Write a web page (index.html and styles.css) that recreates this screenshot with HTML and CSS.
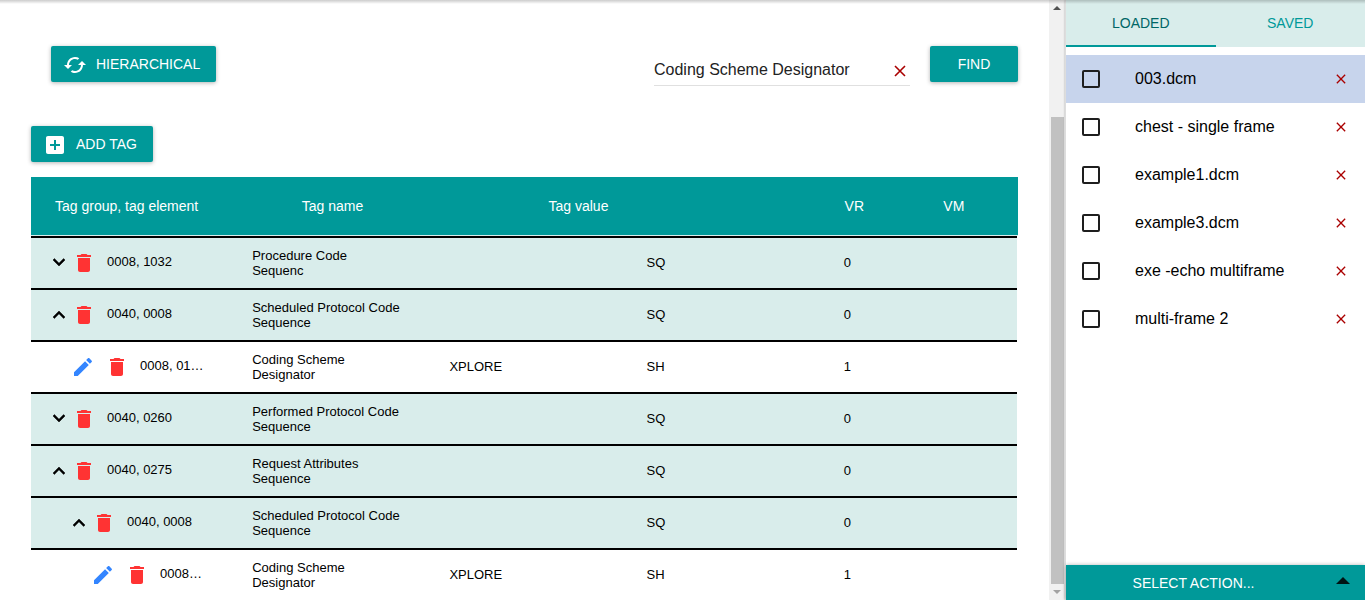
FILE: index.html
```html
<!DOCTYPE html>
<html lang="en">
<head>
<meta charset="utf-8">
<title>DICOM tags</title>
<link rel="stylesheet" href="styles.css">
</head>
<body>
<svg class="defs" aria-hidden="true">
  <symbol id="cached" viewBox="0 0 24 24"><path d="M19 8l-4 4h3c0 3.31-2.69 6-6 6-1.01 0-1.97-.25-2.8-.7l-1.46 1.46C8.97 19.54 10.43 20 12 20c4.42 0 8-3.58 8-8h3l-4-4zM6 12c0-3.31 2.69-6 6-6 1.01 0 1.97.25 2.8.7l1.46-1.46C15.03 4.46 13.57 4 12 4c-4.42 0-8 3.58-8 8H1l4 4 4-4H6z"/></symbol>
  <symbol id="add-box" viewBox="0 0 24 24"><path d="M19 3H5c-1.11 0-2 .9-2 2v14c0 1.1.89 2 2 2h14c1.1 0 2-.9 2-2V5c0-1.1-.9-2-2-2zm-2 10h-4v4h-2v-4H7v-2h4V7h2v4h4v2z"/></symbol>
  <symbol id="more" viewBox="0 0 24 24"><path d="M16.590 7.590L12 12.170 7.410 7.590 6 9l6 6 6-6z" stroke="currentColor" stroke-width=".5"/></symbol>
  <symbol id="less" viewBox="0 0 24 24"><path d="M12 8l-6 6 1.41 1.41L12 10.83l4.59 4.58L18 14z" stroke="currentColor" stroke-width=".5"/></symbol>
  <symbol id="trash" viewBox="0 0 24 24"><path d="M6 19c0 1.1.9 2 2 2h8c1.1 0 2-.9 2-2V7H6v12zM19 4h-3.500l-1-1h-5l-1 1H5v2h14V4z"/></symbol>
  <symbol id="pencil" viewBox="0 0 24 24"><path d="M3 17.250V21h3.750L17.810 9.940l-3.750-3.750L3 17.250zM20.710 7.040c.39-.39.39-1.020 0-1.410l-2.340-2.340c-.39-.39-1.020-.39-1.410 0l-1.830 1.830 3.750 3.750 1.830-1.830z"/></symbol>
  <symbol id="cross" viewBox="0 0 12 12"><path d="M1 1l10 10M11 1L1 11" fill="none" stroke="currentColor" stroke-width="1.600"/></symbol>
</svg>
<div class="app">
  <main class="content">
    <div class="toolbar">
      <button class="btn btn-icon" type="button"><svg class="icon"><use href="#cached"/></svg>HIERARCHICAL</button>
      <form class="search">
        <div class="field">
          <input type="text" aria-label="Find tag" value="Coding Scheme Designator">
          <button class="clear" type="button" aria-label="Clear"><svg class="cross"><use href="#cross"/></svg></button>
        </div>
        <button class="btn btn-find" type="button">FIND</button>
      </form>
    </div>
    <button class="btn btn-icon" type="button"><svg class="icon"><use href="#add-box"/></svg>ADD TAG</button>
    <table class="tags">
      <thead>
        <tr><th>Tag group, tag element</th><th>Tag name</th><th>Tag value</th><th>VR</th><th>VM</th></tr>
      </thead>
      <tbody>
        <tr class="group">
          <td><div class="tag"><button type="button" aria-label="Expand"><svg class="icon"><use href="#more"/></svg></button><button class="delete" type="button" aria-label="Delete"><svg class="icon"><use href="#trash"/></svg></button><span class="code">0008, 1032</span></div></td>
          <td>Procedure Code Sequenc</td><td></td><td>SQ</td><td>0</td>
        </tr>
        <tr class="group">
          <td><div class="tag"><button type="button" aria-label="Collapse"><svg class="icon"><use href="#less"/></svg></button><button class="delete" type="button" aria-label="Delete"><svg class="icon"><use href="#trash"/></svg></button><span class="code">0040, 0008</span></div></td>
          <td>Scheduled Protocol Code Sequence</td><td></td><td>SQ</td><td>0</td>
        </tr>
        <tr class="leaf">
          <td><div class="tag"><button class="edit" type="button" aria-label="Edit"><svg class="icon"><use href="#pencil"/></svg></button><button class="delete" type="button" aria-label="Delete"><svg class="icon"><use href="#trash"/></svg></button><span class="code">0008, 01…</span></div></td>
          <td>Coding Scheme Designator</td><td>XPLORE</td><td>SH</td><td>1</td>
        </tr>
        <tr class="group">
          <td><div class="tag"><button type="button" aria-label="Expand"><svg class="icon"><use href="#more"/></svg></button><button class="delete" type="button" aria-label="Delete"><svg class="icon"><use href="#trash"/></svg></button><span class="code">0040, 0260</span></div></td>
          <td>Performed Protocol Code Sequence</td><td></td><td>SQ</td><td>0</td>
        </tr>
        <tr class="group">
          <td><div class="tag"><button type="button" aria-label="Collapse"><svg class="icon"><use href="#less"/></svg></button><button class="delete" type="button" aria-label="Delete"><svg class="icon"><use href="#trash"/></svg></button><span class="code">0040, 0275</span></div></td>
          <td>Request Attributes Sequence</td><td></td><td>SQ</td><td>0</td>
        </tr>
        <tr class="group nested">
          <td><div class="tag"><button type="button" aria-label="Collapse"><svg class="icon"><use href="#less"/></svg></button><button class="delete" type="button" aria-label="Delete"><svg class="icon"><use href="#trash"/></svg></button><span class="code">0040, 0008</span></div></td>
          <td>Scheduled Protocol Code Sequence</td><td></td><td>SQ</td><td>0</td>
        </tr>
        <tr class="leaf nested">
          <td><div class="tag"><button class="edit" type="button" aria-label="Edit"><svg class="icon"><use href="#pencil"/></svg></button><button class="delete" type="button" aria-label="Delete"><svg class="icon"><use href="#trash"/></svg></button><span class="code">0008…</span></div></td>
          <td>Coding Scheme Designator</td><td>XPLORE</td><td>SH</td><td>1</td>
        </tr>
      </tbody>
    </table>
  </main>
  <div class="scrollbar" aria-hidden="true">
    <svg class="arrow" viewBox="0 0 14 16"><path d="M3 10h8L7 6z"/></svg>
    <div class="thumb"></div>
    <svg class="arrow off" viewBox="0 0 14 16"><path d="M3 6h8l-4 4z"/></svg>
  </div>
  <aside class="files">
    <nav class="tabs">
      <button class="tab active" type="button">LOADED</button>
      <button class="tab" type="button">SAVED</button>
    </nav>
    <ul class="list">
      <li class="selected"><label><input type="checkbox">003.dcm</label><button class="remove" type="button" aria-label="Remove"><svg class="cross"><use href="#cross"/></svg></button></li>
      <li><label><input type="checkbox">chest - single frame</label><button class="remove" type="button" aria-label="Remove"><svg class="cross"><use href="#cross"/></svg></button></li>
      <li><label><input type="checkbox">example1.dcm</label><button class="remove" type="button" aria-label="Remove"><svg class="cross"><use href="#cross"/></svg></button></li>
      <li><label><input type="checkbox">example3.dcm</label><button class="remove" type="button" aria-label="Remove"><svg class="cross"><use href="#cross"/></svg></button></li>
      <li><label><input type="checkbox">exe -echo multiframe</label><button class="remove" type="button" aria-label="Remove"><svg class="cross"><use href="#cross"/></svg></button></li>
      <li><label><input type="checkbox">multi-frame 2</label><button class="remove" type="button" aria-label="Remove"><svg class="cross"><use href="#cross"/></svg></button></li>
    </ul>
    <div class="actions">
      <button class="action" type="button">SELECT ACTION...</button>
      <button class="caret" type="button" aria-label="Open actions"><svg viewBox="0 0 14 7"><path d="M0 7h14L7 0z"/></svg></button>
    </div>
  </aside>
  <div class="topshade"></div>
</div>
</body>
</html>
```
FILE: styles.css
```css
* {
  box-sizing: border-box;
}

body {
  margin: 0;
  background: #fff;
  color: #111;
  font: 14px "Liberation Sans", Arial, sans-serif;
}

button {
  padding: 0;
  border: 0;
  background: none;
  color: inherit;
  font: inherit;
  cursor: pointer;
}

svg {
  display: block;
  fill: currentColor;
}

.defs {
  display: none;
}

.icon {
  flex: none;
  width: 24px;
  height: 24px;
}

.app {
  position: relative;
  display: flex;
  height: 100vh;
  overflow: hidden;
}

/* shadow cast by the header above the view */
.topshade {
  position: absolute;
  inset: 0 0 auto;
  height: 4px;
  background: linear-gradient(rgba(0, 0, 0, 0.2), rgba(0, 0, 0, 0));
}

.content {
  flex: 1;
  min-width: 0;
  padding: 46px 31px 0;
  overflow: hidden;
}

.toolbar {
  display: flex;
  justify-content: space-between;
  align-items: flex-start;
  margin-bottom: 40px;
  padding-left: 20px;
}

.btn {
  height: 36px;
  padding: 0 16px;
  border-radius: 2px;
  background: #099;
  box-shadow: 0 1px 4px rgba(0, 0, 0, 0.3);
  color: #fff;
}

.btn-icon {
  display: flex;
  align-items: center;
  gap: 9px;
  padding-left: 12px;
}

.btn-icon .icon {
  margin-top: 2px;
}

.btn-find {
  min-width: 88px;
}

.search {
  display: flex;
  gap: 20px;
}

.field {
  display: flex;
  align-items: center;
  width: 256px;
  height: 40px;
  padding-top: 8px;
  border-bottom: 1px solid #e0e0e0;
}

.field input {
  flex: 1;
  min-width: 0;
  padding: 0;
  border: 0;
  outline: 0;
  background: none;
  color: #222;
  font: 16px "Liberation Sans", Arial, sans-serif;
}

.clear {
  margin: 2px 4px 0;
  color: #a00;
}

.clear .cross {
  width: 12px;
  height: 12px;
}

.tags {
  display: block;
  margin-top: 15px;
}

.tags thead,
.tags tbody {
  display: block;
}

.tags tr {
  display: grid;
  align-items: center;
}

.tags thead tr {
  grid-template-columns: 25fr 25fr 30fr 10fr 10fr;
  height: 59px;
  border-bottom: 1px solid #d9edeb;
  background: #099;
  color: #fff;
}

.tags th {
  padding: 0 0 0 24px;
  font-weight: 400;
  text-align: left;
}

.tags tbody {
  margin-right: 1px;
  color: #000;
  font-size: 13px;
  line-height: 15px;
}

.tags tbody tr {
  grid-template-columns: repeat(5, minmax(0, 1fr));
  height: 52px;
  border-top: 2px solid #000;
}

.tags .group {
  background: #d9edeb;
}

.tags td {
  padding: 0 24px;
}

.tags td:nth-child(n + 3) {
  padding-bottom: 2px;
}

.tags td:first-child {
  padding-right: 23px;
  padding-left: 16px;
}

.tags .leaf td:first-child {
  padding-left: 40px;
}

.tags .nested td:first-child {
  padding-left: 36px;
}

.tags .leaf.nested td:first-child {
  padding-left: 60px;
}

.tag {
  display: flex;
  align-items: center;
  gap: 1px;
}

.leaf .tag {
  gap: 10px;
}

.code {
  margin: 0 0 3px 10px;
  white-space: nowrap;
}

.leaf .code {
  margin-left: 1px;
}

.delete {
  color: #f33;
}

.edit {
  color: #3385ff;
}

.scrollbar {
  display: flex;
  flex-direction: column;
  width: 16px;
  padding-right: 1px;
  padding-left: 1px;
  background: #f1f1f1;
}

.arrow {
  width: 14px;
  height: 16px;
  color: #505050;
}

.arrow.off {
  color: #a3a3a3;
}

.thumb {
  flex: 1;
  margin: 101px 0 0 1px;
  background: #c1c1c1;
}

.files {
  display: flex;
  flex-direction: column;
  width: 300px;
  border-left: 1px solid #ddd;
  background: #fff;
  box-shadow: 0 0 2px rgba(0, 0, 0, 0.3);
}

.tabs {
  display: flex;
  margin-bottom: 8px;
  background: #d9edeb;
}

.tab {
  flex: 1;
  height: 47px;
  border-bottom: 2px solid transparent;
  color: #099;
}

.tab.active {
  border-color: #099;
  color: #066;
}

.list {
  flex: 1;
  margin: 0;
  padding: 0;
  list-style: none;
  color: #000;
  font-size: 16px;
}

.list li {
  display: flex;
  align-items: center;
  height: 48px;
  padding: 0 19px 0 16px;
}

.list .selected {
  background: #c7d4ec;
}

.list label {
  display: flex;
  flex: 1;
  align-items: center;
  gap: 35px;
}

.list input {
  appearance: none;
  width: 18px;
  height: 18px;
  margin: 0;
  border: 2px solid #1e1e1e;
  border-radius: 2px;
}

.remove {
  color: #a00;
}

.remove .cross {
  width: 10px;
  height: 10px;
}

.actions {
  display: flex;
  height: 35px;
  background: #099;
  box-shadow: 0 0 4px rgba(0, 0, 0, 0.3);
}

.action {
  flex: 1;
  color: #fff;
}

.caret {
  display: flex;
  align-items: center;
  justify-content: center;
  width: 44px;
  padding-bottom: 4px;
  color: #001414;
}

.caret svg {
  width: 14px;
  height: 7px;
}
```
